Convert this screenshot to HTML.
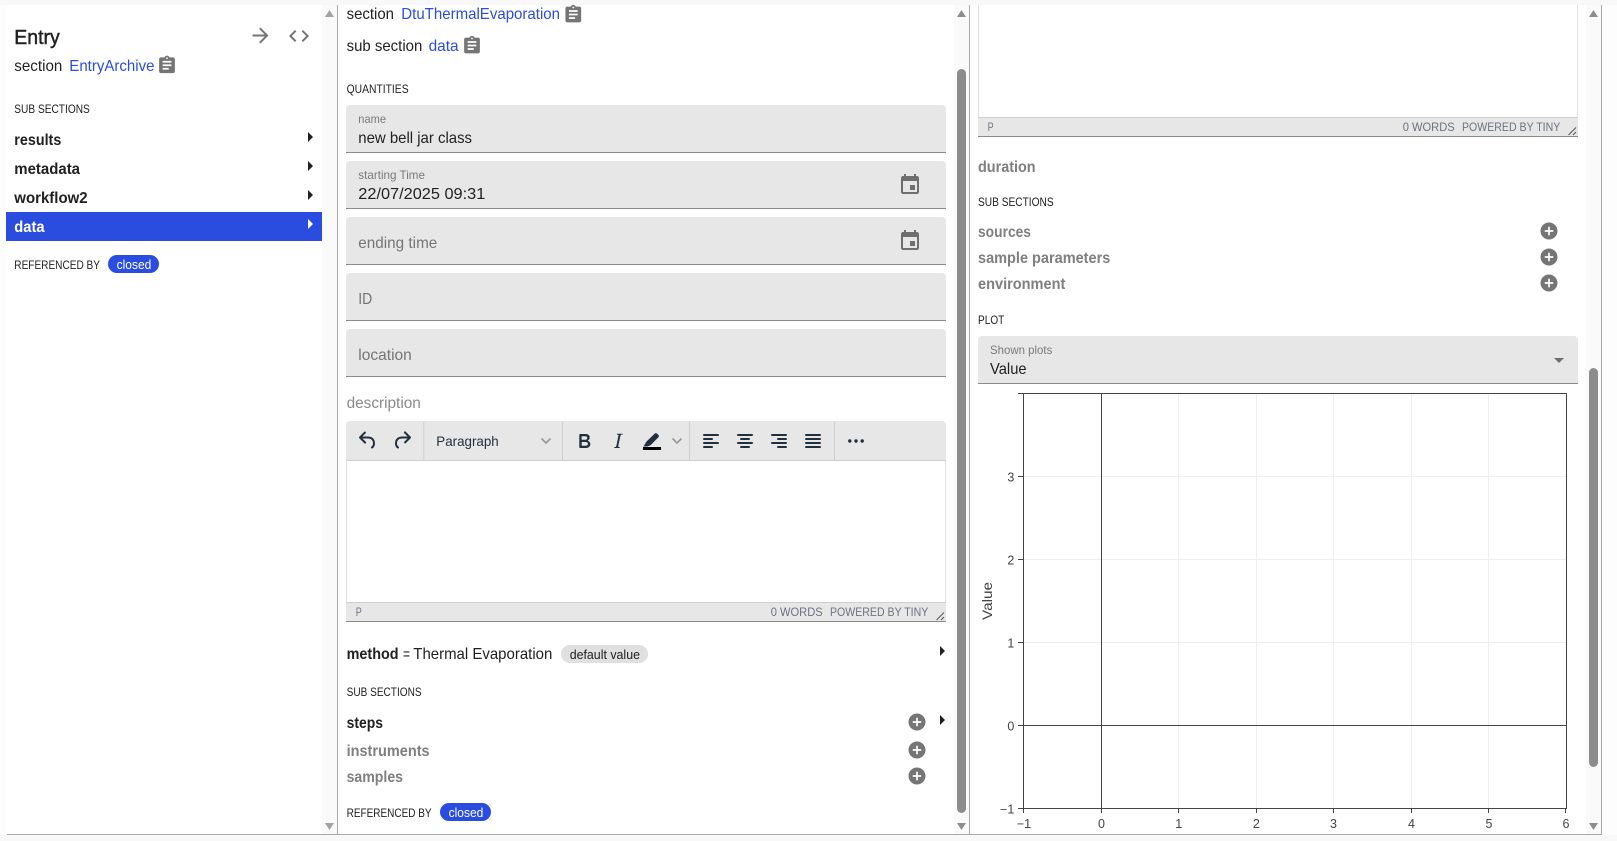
<!DOCTYPE html>
<html lang="en"><head><meta charset="utf-8"><title>Entry</title>
<style>
html,body{margin:0;padding:0;background:#fafafa;width:1617px;height:841px;overflow:hidden}
svg{display:block}
text{font-family:"Liberation Sans",sans-serif;fill:#212121;white-space:pre}
.s16{font-size:16px}
.s12{font-size:12px}
.b{font-size:16px;font-weight:700}
.g{fill:#757575}
.gb{font-size:16px;font-weight:700;fill:#7f7f7f}
.bl{fill:#2a4cdf;font-size:16px}
.lab{font-size:12px;fill:#7a7a7a}
.st{font-size:12px;fill:#6a7480}
.w{fill:#fff}
.t{font-size:12.5px;fill:#444}
</style></head><body>
<svg width="1617" height="841" viewBox="0 0 1617 841" xmlns="http://www.w3.org/2000/svg">
<defs>
<symbol id="clip" viewBox="0 0 24 24"><path fill="#757575" d="M19 3h-4.18C14.4 1.84 13.3 1 12 1c-1.3 0-2.4.84-2.82 2H5c-1.1 0-2 .9-2 2v14c0 1.1.9 2 2 2h14c1.1 0 2-.9 2-2V5c0-1.1-.9-2-2-2zm-7 0c.55 0 1 .45 1 1s-.45 1-1 1-1-.45-1-1 .45-1 1-1zm2 14H7v-2h7v2zm3-4H7v-2h10v2zm0-4H7V7h10v2z"/></symbol>
<symbol id="cal" viewBox="0 0 24 24"><path fill="#6e6e6e" d="M17 12h-5v5h5v-5zM16 1v2H8V1H6v2H5c-1.11 0-1.99.9-1.99 2L3 19c0 1.1.89 2 2 2h14c1.1 0 2-.9 2-2V5c0-1.1-.9-2-2-2h-1V1h-2zm3 18H5V8h14v11z"/></symbol>
<symbol id="add" viewBox="0 0 24 24"><path fill="#757575" d="M12 2C6.48 2 2 6.48 2 12s4.48 10 10 10 10-4.48 10-10S17.52 2 12 2zm5 11h-4v4h-2v-4H7v-2h4V7h2v4h4v2z"/></symbol>
</defs>

<!-- page + card -->
<rect x="0" y="0" width="1617" height="841" fill="#fdfdfd"/>
<rect x="0" y="0" width="1617" height="5" fill="#f8f8f8"/>
<rect x="0" y="835" width="1617" height="6" fill="#f8f8f8"/>
<rect x="6" y="5" width="1596" height="830" rx="4" fill="#fff"/>
<rect x="7" y="834" width="1595" height="1" fill="#a8a8a8"/>
<rect x="337" y="5" width="1" height="829" fill="#a8a8a8"/>
<rect x="969" y="5" width="1" height="829" fill="#a8a8a8"/>
<rect x="1601" y="5" width="1" height="829" fill="#a8a8a8"/>

<!-- scrollbars -->
<rect x="322" y="5" width="15" height="829" fill="#fafafa"/>
<rect x="954" y="5" width="15" height="829" fill="#fafafa"/>
<rect x="1586" y="5" width="15" height="829" fill="#fafafa"/>
<polygon points="325,17 334,17 329.5,10" fill="#a3a3a3"/>
<polygon points="325,823 334,823 329.5,830" fill="#a3a3a3"/>
<polygon points="957,17 966,17 961.5,10" fill="#8c8c8c"/>
<polygon points="957,823 966,823 961.5,830" fill="#8c8c8c"/>
<polygon points="1589,17 1598,17 1593.5,10" fill="#8c8c8c"/>
<polygon points="1589,823 1598,823 1593.5,830" fill="#8c8c8c"/>
<rect x="957" y="69" width="9" height="744" rx="4.5" fill="#8c8c8c"/>
<rect x="1589" y="368" width="9" height="399" rx="4.5" fill="#8c8c8c"/>

<!-- LEFT PANEL -->
<text x="14.3" y="44" textLength="45.5" lengthAdjust="spacingAndGlyphs" style="font-size:20px;font-weight:400;stroke:#212121;stroke-width:.45">Entry</text>
<path fill="#757575" transform="translate(248.5 23.5)" d="M12 4l-1.41 1.41L16.17 11H4v2h12.17l-5.58 5.59L12 20l8-8z"/>
<path fill="#757575" transform="translate(287 24)" d="M9.4 16.6L4.8 12l4.6-4.6L8 6l-6 6 6 6 1.4-1.4zm5.2 0l4.6-4.6-4.6-4.6L16 6l6 6-6 6-1.4-1.4z"/>
<text class="s16" x="14.3" y="71" textLength="48" lengthAdjust="spacingAndGlyphs">section</text>
<text class="bl" x="69.3" y="71" textLength="85.2" lengthAdjust="spacingAndGlyphs">EntryArchive</text>
<use href="#clip" x="156.5" y="54.8" width="21" height="21"/>
<text class="s12" x="14.3" y="113" textLength="75.5" lengthAdjust="spacingAndGlyphs">SUB SECTIONS</text>
<text class="b" x="14.3" y="145" textLength="47" lengthAdjust="spacingAndGlyphs">results</text>
<text class="b" x="14.3" y="174" textLength="65.7" lengthAdjust="spacingAndGlyphs">metadata</text>
<text class="b" x="14.3" y="203" textLength="73.3" lengthAdjust="spacingAndGlyphs">workflow2</text>
<polygon points="308,132 313,137 308,142" fill="#212121"/>
<polygon points="308,161 313,166 308,171" fill="#212121"/>
<polygon points="308,190 313,195 308,200" fill="#212121"/>
<rect x="6" y="212" width="316" height="29" fill="#2a4cdf"/>
<text class="b w" x="14.3" y="232" textLength="30.3" lengthAdjust="spacingAndGlyphs">data</text>
<polygon points="308,219 313,224 308,229" fill="#fff"/>
<text class="s12" x="14.3" y="269" textLength="85.7" lengthAdjust="spacingAndGlyphs">REFERENCED BY</text>
<rect x="108" y="255" width="51" height="18" rx="9" fill="#2a4cdf"/>
<text class="w" x="116.6" y="269" style="font-size:13px" textLength="34.7" lengthAdjust="spacingAndGlyphs">closed</text>

<!-- MIDDLE PANEL -->
<text class="s16" x="346.6" y="19" textLength="47.4" lengthAdjust="spacingAndGlyphs">section</text>
<text class="bl" x="401.3" y="19" textLength="158.7" lengthAdjust="spacingAndGlyphs">DtuThermalEvaporation</text>
<use href="#clip" x="562.8" y="4" width="21" height="21"/>
<text class="s16" x="346.6" y="51" textLength="75.7" lengthAdjust="spacingAndGlyphs">sub section</text>
<text class="bl" x="428.6" y="51" textLength="30" lengthAdjust="spacingAndGlyphs">data</text>
<use href="#clip" x="461.5" y="35" width="21" height="21"/>
<text class="s12" x="346.6" y="93" textLength="62" lengthAdjust="spacingAndGlyphs">QUANTITIES</text>

<path d="M346 153V109a4 4 0 0 1 4-4H942a4 4 0 0 1 4 4V153z" fill="#e7e7e7"/>
<rect x="346" y="152" width="600" height="1" fill="#8a8a8a"/>
<text class="lab" x="358.3" y="123" textLength="27.7" lengthAdjust="spacingAndGlyphs">name</text>
<text class="s16" x="358.3" y="143" textLength="113.7" lengthAdjust="spacingAndGlyphs">new bell jar class</text>

<path d="M346 209V165a4 4 0 0 1 4-4H942a4 4 0 0 1 4 4V209z" fill="#e7e7e7"/>
<rect x="346" y="208" width="600" height="1" fill="#8a8a8a"/>
<text class="lab" x="358.3" y="179" textLength="66.7" lengthAdjust="spacingAndGlyphs">starting Time</text>
<text class="s16" x="358.3" y="199" textLength="127" lengthAdjust="spacingAndGlyphs">22/07/2025 09:31</text>
<use href="#cal" x="898" y="173" width="24" height="24"/>

<path d="M346 265V221a4 4 0 0 1 4-4H942a4 4 0 0 1 4 4V265z" fill="#e7e7e7"/>
<rect x="346" y="264" width="600" height="1" fill="#8a8a8a"/>
<text class="s16 g" x="358.3" y="248" textLength="79" lengthAdjust="spacingAndGlyphs">ending time</text>
<use href="#cal" x="898" y="229" width="24" height="24"/>

<path d="M346 321V277a4 4 0 0 1 4-4H942a4 4 0 0 1 4 4V321z" fill="#e7e7e7"/>
<rect x="346" y="320" width="600" height="1" fill="#8a8a8a"/>
<text class="s16 g" x="358.3" y="304" textLength="14" lengthAdjust="spacingAndGlyphs">ID</text>

<path d="M346 377V333a4 4 0 0 1 4-4H942a4 4 0 0 1 4 4V377z" fill="#e7e7e7"/>
<rect x="346" y="376" width="600" height="1" fill="#8a8a8a"/>
<text class="s16 g" x="358.3" y="360" textLength="53.5" lengthAdjust="spacingAndGlyphs">location</text>

<text class="s16" x="346.6" y="408" textLength="74.2" lengthAdjust="spacingAndGlyphs" style="fill:#8a8a8a">description</text>

<!-- Editor 1 -->
<path d="M346 622V425a4 4 0 0 1 4-4H942a4 4 0 0 1 4 4V622z" fill="#e7e7e7"/>
<rect x="347" y="460" width="598" height="142" fill="#fff"/>
<rect x="346" y="460" width="600" height="1" fill="#cfcfcf"/>
<rect x="346" y="461" width="1" height="141" fill="#e0e0e0"/>
<rect x="945" y="461" width="1" height="141" fill="#e0e0e0"/>
<rect x="346" y="602" width="600" height="1" fill="#cfcfcf"/>
<rect x="346" y="621" width="600" height="1" fill="#8a8a8a"/>
<rect x="423.3" y="422" width="1" height="38" fill="#cfcfcf"/>
<rect x="562" y="422" width="1" height="38" fill="#cfcfcf"/>
<rect x="689" y="422" width="1" height="38" fill="#cfcfcf"/>
<rect x="834" y="422" width="1" height="38" fill="#cfcfcf"/>
<g fill="#222f3e">
<path transform="translate(356 428.5)" d="M6.4 8H12c3.7 0 6.2 2 6.8 5.1.6 2.7-.4 5.6-2.3 6.8a1 1 0 0 1-1-1.8c1.1-.6 1.8-2.7 1.4-4.6-.5-2.1-2.1-3.5-4.9-3.5H6.4l3.3 3.3a1 1 0 1 1-1.4 1.4l-5-5a1 1 0 0 1 0-1.4l5-5a1 1 0 0 1 1.4 1.4L6.4 8z"/>
<path transform="translate(390 428.5)" d="M17.6 10H12c-2.8 0-4.4 1.4-4.9 3.5-.4 2 .3 4 1.4 4.6a1 1 0 1 1-1 1.8c-2-1.2-2.9-4.1-2.3-6.8.6-3 3.2-5.1 6.8-5.1h5.6l-3.3-3.3a1 1 0 1 1 1.4-1.4l5 5a1 1 0 0 1 0 1.4l-5 5a1 1 0 0 1-1.4-1.4l3.3-3.3z"/>
<path transform="translate(572.3 429)" d="M7.8 19c-.3 0-.5 0-.6-.2l-.2-.5V5.7c0-.2 0-.4.2-.5l.6-.2h5c1.5 0 2.7.3 3.5 1 .7.6 1.1 1.4 1.1 2.5a3 3 0 0 1-.6 1.9c-.4.6-1 1-1.6 1.2.4.1.9.3 1.3.6s.8.7 1 1.2c.4.4.5 1 .5 1.6 0 1.3-.4 2.3-1.3 3-.8.7-2.1 1-3.8 1H7.8zm5-8.3c.6 0 1.2-.1 1.6-.5.4-.3.6-.7.6-1.3 0-1.1-.8-1.7-2.4-1.7H9.3v3.5h3.4zm.5 6c.7 0 1.3-.1 1.7-.4.4-.4.6-.9.6-1.5s-.2-1-.7-1.4c-.4-.3-1-.4-2-.4H9.4v3.8h4z"/>
<path transform="translate(606 429)" d="M16.7 4.7l-.1.9h-.3c-.6 0-1 0-1.4.3-.3.3-.4.6-.5 1.1l-2.1 9.8v.6c0 .5.4.8 1.4.8h.2l-.2.8H8l.2-.8h.2c1.1 0 1.8-.5 2-1.5l2-9.8.1-.5c0-.6-.4-.8-1.4-.8h-.3l.2-.9h5.8z"/>
<path d="M643.5 446.5L646.5 441.5L655 433.4Q656 432.7 657 433.6L658.7 435.3Q659.3 436.3 658.4 437.2L650.5 445.3L647.5 446.5Z"/>
<circle cx="849.8" cy="441" r="1.7"/><circle cx="856" cy="441" r="1.7"/><circle cx="862.2" cy="441" r="1.7"/>
</g>
<rect x="643" y="447" width="18" height="3" fill="#000"/>
<polyline points="541.5,438.5 546,443 550.5,438.5" fill="none" stroke="#9a9a9a" stroke-width="1.7"/>
<polyline points="672.5,438.5 677,443 681.5,438.5" fill="none" stroke="#9a9a9a" stroke-width="1.7"/>
<text x="436.3" y="446" style="font-size:14px;fill:#222f3e" textLength="62.4" lengthAdjust="spacingAndGlyphs">Paragraph</text>
<g fill="#222f3e">
<rect x="703" y="434" width="16" height="2" rx="1"/><rect x="703" y="438" width="10" height="2" rx="1"/><rect x="703" y="442" width="16" height="2" rx="1"/><rect x="703" y="446" width="10" height="2" rx="1"/>
<rect x="737" y="434" width="16" height="2" rx="1"/><rect x="740" y="438" width="10" height="2" rx="1"/><rect x="737" y="442" width="16" height="2" rx="1"/><rect x="740" y="446" width="10" height="2" rx="1"/>
<rect x="771" y="434" width="16" height="2" rx="1"/><rect x="777" y="438" width="10" height="2" rx="1"/><rect x="771" y="442" width="16" height="2" rx="1"/><rect x="777" y="446" width="10" height="2" rx="1"/>
<rect x="805" y="434" width="16" height="2" rx="1"/><rect x="805" y="438" width="16" height="2" rx="1"/><rect x="805" y="442" width="16" height="2" rx="1"/><rect x="805" y="446" width="16" height="2" rx="1"/>
</g>
<text class="st" x="355.7" y="616" textLength="6" lengthAdjust="spacingAndGlyphs">P</text>
<text class="st" x="770.7" y="616" textLength="52" lengthAdjust="spacingAndGlyphs">0 WORDS</text>
<text class="st" x="830" y="616" textLength="98.3" lengthAdjust="spacingAndGlyphs">POWERED BY TINY</text>
<path d="M936.5 620L944 612.5M941 620L944 617" stroke="#555" stroke-width="1" fill="none"/>

<!-- method -->
<text class="b" x="346.6" y="659" textLength="52" lengthAdjust="spacingAndGlyphs">method</text>
<text class="s16" x="403" y="659" textLength="7" lengthAdjust="spacingAndGlyphs">=</text>
<text class="s16" x="413.3" y="659" textLength="139" lengthAdjust="spacingAndGlyphs">Thermal Evaporation</text>
<rect x="561" y="645" width="87" height="18" rx="9" fill="#e0e0e0"/>
<text x="569.7" y="659" style="font-size:13px" textLength="70.3" lengthAdjust="spacingAndGlyphs">default value</text>
<polygon points="940,646 945,651 940,656" fill="#212121"/>

<text class="s12" x="346.6" y="696" textLength="75" lengthAdjust="spacingAndGlyphs">SUB SECTIONS</text>
<text class="b" x="346.6" y="728" textLength="36.4" lengthAdjust="spacingAndGlyphs">steps</text>
<polygon points="940,715 945,720 940,725" fill="#212121"/>
<text class="gb" x="346.6" y="756" textLength="83" lengthAdjust="spacingAndGlyphs">instruments</text>
<text class="gb" x="346.6" y="782" textLength="56.4" lengthAdjust="spacingAndGlyphs">samples</text>
<use href="#add" x="906.8" y="711.8" width="20.4" height="20.4"/>
<use href="#add" x="906.8" y="739.8" width="20.4" height="20.4"/>
<use href="#add" x="906.8" y="765.8" width="20.4" height="20.4"/>
<text class="s12" x="346.6" y="817" textLength="85" lengthAdjust="spacingAndGlyphs">REFERENCED BY</text>
<rect x="440" y="803" width="51" height="18" rx="9" fill="#2a4cdf"/>
<text class="w" x="448.6" y="817" style="font-size:13px" textLength="34.7" lengthAdjust="spacingAndGlyphs">closed</text>

<!-- RIGHT PANEL editor stub -->
<rect x="978" y="5" width="1" height="112" fill="#e0e0e0"/>
<rect x="1577" y="5" width="1" height="112" fill="#e0e0e0"/>
<rect x="978" y="117" width="600" height="20" fill="#e7e7e7"/>
<rect x="978" y="117" width="600" height="1" fill="#cfcfcf"/>
<rect x="978" y="136" width="600" height="1" fill="#8a8a8a"/>
<text class="st" x="987.6" y="131" textLength="6" lengthAdjust="spacingAndGlyphs">P</text>
<text class="st" x="1402.7" y="131" textLength="52" lengthAdjust="spacingAndGlyphs">0 WORDS</text>
<text class="st" x="1462" y="131" textLength="98.3" lengthAdjust="spacingAndGlyphs">POWERED BY TINY</text>
<path d="M1568.5 135L1576 127.5M1573 135L1576 132" stroke="#555" stroke-width="1" fill="none"/>

<text class="gb" x="978" y="172" textLength="57.6" lengthAdjust="spacingAndGlyphs">duration</text>
<text class="s12" x="978" y="206" textLength="75.6" lengthAdjust="spacingAndGlyphs">SUB SECTIONS</text>
<text class="gb" x="978" y="237" textLength="53" lengthAdjust="spacingAndGlyphs">sources</text>
<text class="gb" x="978" y="263" textLength="132.3" lengthAdjust="spacingAndGlyphs">sample parameters</text>
<text class="gb" x="978" y="289" textLength="87.3" lengthAdjust="spacingAndGlyphs">environment</text>
<use href="#add" x="1538.8" y="220.8" width="20.4" height="20.4"/>
<use href="#add" x="1538.8" y="246.8" width="20.4" height="20.4"/>
<use href="#add" x="1538.8" y="272.8" width="20.4" height="20.4"/>
<text class="s12" x="978" y="324" textLength="26.3" lengthAdjust="spacingAndGlyphs">PLOT</text>

<path d="M978 384V340a4 4 0 0 1 4-4H1574a4 4 0 0 1 4 4V384z" fill="#e7e7e7"/>
<rect x="978" y="383" width="600" height="1" fill="#8a8a8a"/>
<text class="lab" x="990" y="354" textLength="62.3" lengthAdjust="spacingAndGlyphs">Shown plots</text>
<text class="s16" x="990" y="374" textLength="36.6" lengthAdjust="spacingAndGlyphs">Value</text>
<polygon points="1554,358 1564,358 1559,363" fill="#6e6e6e"/>

<!-- PLOT -->
<g fill="#eeeeee">
<rect x="1023" y="476" width="543" height="1"/><rect x="1023" y="559" width="543" height="1"/><rect x="1023" y="642" width="543" height="1"/>
<rect x="1178" y="394" width="1" height="414"/><rect x="1256" y="394" width="1" height="414"/><rect x="1333" y="394" width="1" height="414"/><rect x="1411" y="394" width="1" height="414"/><rect x="1488" y="394" width="1" height="414"/>
</g>
<g fill="#444">
<rect x="1018" y="393" width="549" height="1"/>
<rect x="1018" y="808" width="549" height="1"/>
<rect x="1023" y="393" width="1" height="420"/>
<rect x="1566" y="393" width="1" height="416"/>
<rect x="1101" y="393" width="1" height="415"/>
<rect x="1023" y="725" width="543" height="1"/>
<rect x="1018" y="476" width="5" height="1"/><rect x="1018" y="559" width="5" height="1"/><rect x="1018" y="642" width="5" height="1"/><rect x="1018" y="725" width="5" height="1"/>
<rect x="1101" y="808" width="1" height="5"/><rect x="1178" y="808" width="1" height="5"/><rect x="1256" y="808" width="1" height="5"/><rect x="1333" y="808" width="1" height="5"/><rect x="1411" y="808" width="1" height="5"/><rect x="1488" y="808" width="1" height="5"/><rect x="1565" y="808" width="1" height="5"/>
</g>
<g text-anchor="end">
<text class="t" x="1014.3" y="481.5">3</text>
<text class="t" x="1014.3" y="564.5">2</text>
<text class="t" x="1014.3" y="647.5">1</text>
<text class="t" x="1014.3" y="730.5">0</text>
<text class="t" x="1014.3" y="813.5">−1</text>
</g>
<g text-anchor="middle">
<text class="t" x="1024" y="828">−1</text>
<text class="t" x="1101.5" y="828">0</text>
<text class="t" x="1178.7" y="828">1</text>
<text class="t" x="1256.3" y="828">2</text>
<text class="t" x="1333.5" y="828">3</text>
<text class="t" x="1411.5" y="828">4</text>
<text class="t" x="1489" y="828">5</text>
<text class="t" x="1566" y="828">6</text>
</g>
<text x="0" y="0" transform="translate(992 620) rotate(-90)" style="font-size:14px;fill:#444" textLength="38" lengthAdjust="spacingAndGlyphs">Value</text>
</svg>
</body></html>
